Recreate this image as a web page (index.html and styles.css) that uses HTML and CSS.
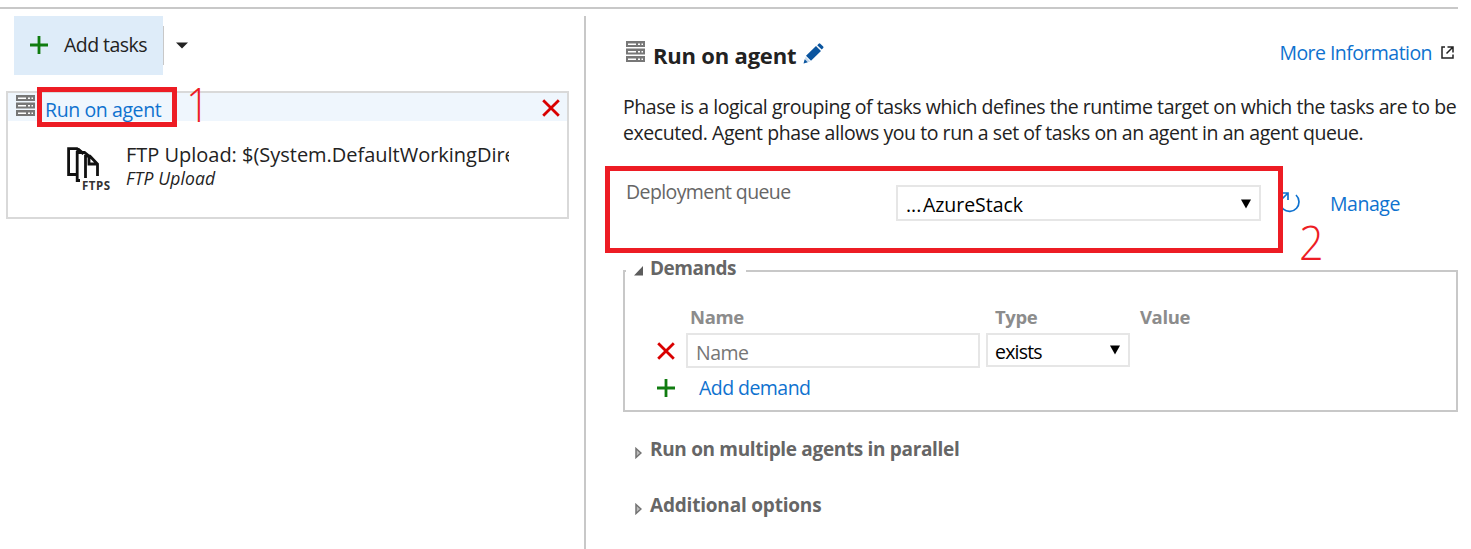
FILE: index.html
```html
<!DOCTYPE html>
<html lang="en">
<head>
<meta charset="utf-8">
<title>Run on agent</title>
<link rel="stylesheet" href="styles.css">
</head>
<body>
<svg class="defs" width="0" height="0" aria-hidden="true">
  <symbol id="server" viewBox="0 0 19 22">
    <path fill="#777" d="M0 0h19v6H0zM0 7.500h19v6H0zM0 15h19v6H0z"/>
    <path fill="#fff" d="M2 2.500h8v1.500h-8zM12 2.500h2v1.500h-2zM15.500 2.500h1.500v1.500h-1.500zM2 10h8v1.500h-8zM12 10h2v1.500h-2zM15.500 10h1.500v1.500h-1.500zM2 17.500h8v1.500h-8zM12 17.500h2v1.500h-2zM15.500 17.500h1.500v1.500h-1.500z"/>
  </symbol>
  <symbol id="plus" viewBox="0 0 18 18"><path fill="#107c10" d="M7.600 0h2.800v7.600H18v2.800h-7.600V18H7.600v-7.600H0V7.600h7.600z"/></symbol>
  <symbol id="cross" viewBox="0 0 18 18"><path fill="none" stroke="#d90000" stroke-width="2.800" d="M1.200 1.200l15.600 15.600M16.800 1.200L1.200 16.800"/></symbol>
  <symbol id="down" viewBox="0 0 10 10"><path d="M0 0.500h10L5 9.500z"/></symbol>
  <symbol id="closed" viewBox="0 0 7 12"><path fill="#bbb" stroke="#737373" stroke-width="1.500" d="M1 1.500L6 6 1 10.500z"/></symbol>
</svg>
<div class="page">
  <aside class="tasks">
    <div class="toolbar">
      <button class="add"><svg class="plus"><use href="#plus"/></svg><span class="t-add">Add tasks</span></button>
      <span class="more"><svg width="12" height="7" viewBox="0 0 12 7"><path fill="#222" d="M0 0.500h12L6 6.500z"/></svg></span>
    </div>
    <section class="card">
      <header class="phase">
        <svg class="server"><use href="#server"/></svg>
        <a class="t-run">Run on agent</a>
        <svg class="cross"><use href="#cross"/></svg>
        <div class="mark mark-one"><span class="digit">1</span></div>
      </header>
      <div class="task">
        <svg class="ftp" width="44" height="46" viewBox="0 0 44 46">
          <g fill="none" stroke="#111" stroke-width="2.800">
            <path d="M9.500 27.500H1.600V1.600H10L16.500 7"/>
            <path d="M13 33.500H10.200V5.500H17.500L22 9"/>
            <path d="M18.500 31V9.200H23L30.500 17V29M22 9.200V17H30.500"/>
          </g>
          <path fill="#111" d="M9 1h3l6 5-8 1z"/>
          <text x="15" y="43" textLength="28" class="ftps">FTPS</text>
        </svg>
        <div class="task-text">
          <div class="task-name">FTP Upload: $(System.DefaultWorkingDire</div>
          <div class="task-type">FTP Upload</div>
        </div>
      </div>
    </section>
  </aside>
  <main class="detail">
    <header class="head">
      <svg class="server"><use href="#server"/></svg>
      <h1>Run on agent</h1>
      <svg class="pencil" width="21" height="21" viewBox="0 0 21 21">
        <path fill="#0b559f" d="M3 12.800L13 3l5 5-10 9.800zM14.200 2.200l1.500-1.500q.8-.7 1.600 0l2.900 2.900q.7.700 0 1.500l-1.500 1.500z"/>
        <path fill="#c5d9ec" d="M2.600 13.700l4.700 4.700-6.300 2z"/><path fill="#0b559f" d="M.5 20.500l1.200-4.200 3 3z"/>
      </svg>
      <a class="t-info">More Information</a>
      <svg class="ext" width="13" height="13" viewBox="0 0 13 13"><path fill="none" stroke="#222" stroke-width="1.500" d="M4 1H1v11h11V8.500M6.500 1H12v5.500M12 1L5.500 7.500"/></svg>
    </header>
    <p class="desc"><span class="d1">Phase is a logical grouping of tasks which defines the runtime target on which the tasks are to be</span><span class="d2">executed. Agent phase allows you to run a set of tasks on an agent in an agent queue.</span></p>
    <div class="queue">
      <label class="t-queue">Deployment queue</label>
      <div class="select wide"><span class="dots">...</span><span class="t-azure">AzureStack</span><svg class="down"><use href="#down"/></svg></div>
      <svg class="refresh" width="22" height="22" viewBox="0 0 22 22"><g fill="none" stroke="#0f72cf" stroke-width="1.700"><path d="M17 3A9.500 9.500 0 1 1 3 4"/><path d="M2 1h7v7M9 1L3 7"/></g></svg>
      <a class="t-manage">Manage</a>
      <div class="mark mark-two"><span class="digit">2</span></div>
    </div>
    <section class="demands">
      <h2 class="legend"><svg width="9" height="10" viewBox="0 0 9 10"><path fill="#5c5c5c" d="M9 0v9.500H0z"/></svg><span class="t-demands">Demands</span></h2>
      <div class="grid labels"><span></span><span class="t-name">Name</span><span class="t-type">Type</span><span class="t-value">Value</span></div>
      <div class="grid fields">
        <svg class="cross"><use href="#cross"/></svg>
        <div class="input"><span class="t-place">Name</span></div>
        <div class="select small"><span class="t-exists">exists</span><svg class="down"><use href="#down"/></svg></div>
      </div>
      <div class="new"><svg class="plus"><use href="#plus"/></svg><a class="t-demand">Add demand</a></div>
    </section>
    <h2 class="fold"><svg width="7" height="12"><use href="#closed"/></svg><span class="t-multi">Run on multiple agents in parallel</span></h2>
    <h2 class="fold"><svg width="7" height="12"><use href="#closed"/></svg><span class="t-options">Additional options</span></h2>
  </main>
</div>
</body>
</html>
```
FILE: styles.css
```css
* { box-sizing: border-box; }
body { margin: 0; background: #fff; color: #222; font: 19.5px/26px "Open Sans", "Noto Sans", sans-serif; overflow: hidden; letter-spacing: -0.55px; }
svg { display: block; flex: none; }
.defs { position: absolute; }
h1, h2, p { margin: 0; }
a { color: #0f72cf; }
span, a, h1 { white-space: nowrap; }
.page { width: 1458px; height: 542px; margin-top: 7px; border-top: 2px solid #c8c8c8; display: flex; }
.tasks { width: 586px; margin-top: 7px; border-right: 2px solid #c8c8c8; }
.toolbar { display: flex; align-items: center; height: 59px; margin-left: 14px; }
.add { width: 149px; height: 59px; padding: 0 0 2px 16px; border: 0; background: #deecf9; display: flex; align-items: center; gap: 16px; font: inherit; color: inherit; letter-spacing: inherit; }
.plus, .cross { width: 18px; height: 18px; }
.more { height: 39px; border-left: 1px solid #c8c8c8; padding-left: 12px; display: flex; align-items: center; }
.card { width: 563px; height: 128px; margin: 16px 0 0 6px; border: 2px solid #d9d9d9; }
.phase { position: relative; display: flex; height: 28px; padding: 2px 8px; background: #eff6fd; }
.server { width: 19px; height: 22px; }
.t-run { margin-left: 10px; line-height: 29px; letter-spacing: -0.4px; }
.phase .cross { margin: 4px -1px 0 auto; }
.task { display: flex; padding: 21px 0 0 59px; }
.ftp { margin-top: 5px; }
.ftps { font: bold 11.500px "Open Sans", sans-serif; fill: #333; letter-spacing: 0; }
.task-text { width: 383px; margin-left: 15px; overflow: hidden; }
.task-name { font-size: 20px; line-height: 25px; letter-spacing: -0.02px; white-space: nowrap; }
.task-type { font-size: 17.500px; line-height: 23px; font-style: italic; letter-spacing: 0.15px; }
.mark { position: absolute; border: 5px solid #ed1c24; }
.mark-one { left: 29px; top: -6px; width: 140px; height: 40px; }
.mark-two { left: -18px; top: 0; width: 678px; height: 87px; }
.digit { position: absolute; color: #ed1c24; font: 300 48px/48px "Open Sans", sans-serif; letter-spacing: 0; transform: scaleX(0.87); transform-origin: left; }
.mark-one .digit { left: 144px; top: -12px; }
.mark-two .digit { left: 689px; top: 47px; transform: scaleX(0.9); }
.detail { width: 872px; padding: 27px 0 0 37px; }
.head { display: flex; height: 57px; padding: 5px 4px 0 3px; }
h1 { margin-left: 8px; font-size: 22px; line-height: 29px; letter-spacing: -0.2px; }
.pencil { margin: 2px 0 0 7px; }
.t-info { margin-left: auto; line-height: 24px; }
.ext { margin: 5px 0 0 9px; }
.desc { height: 73px; padding-top: 1px; }
.desc span { display: block; letter-spacing: -0.44px; }
.queue { position: relative; display: flex; height: 87px; padding-left: 3px; }
.t-queue { width: 270px; margin-top: 13px; color: #666; letter-spacing: -0.6px; }
.select, .input { border: 2px solid #e6e6e6; display: flex; align-items: center; color: #000; }
.wide { width: 365px; height: 36px; margin-top: 19px; padding: 4px 8px 0 8px; }
.dots { letter-spacing: 0; width: 17px; }
.t-azure { letter-spacing: -0.05px; }
.down { width: 10px; height: 10px; margin: -3px 0 0 auto; }
.refresh { margin: 26px 0 0 18px; }
.t-manage { margin: 25px 0 0 29px; letter-spacing: -0.45px; }
.demands { position: relative; width: 835px; height: 142px; margin-top: 17px; border: 2px solid #c8c8c8; }
.legend { position: absolute; left: 1px; top: -17px; width: 120px; padding-left: 8px; display: flex; background: #fff; }
.legend svg { margin: 11px 7px 0 0; }
h2 { font-size: 19px; line-height: 26px; color: #666; letter-spacing: -0.3px; }
.t-demands { letter-spacing: -0.5px; }
.t-multi { letter-spacing: -0.33px; }
.t-options { letter-spacing: -0.2px; }
.grid { display: grid; grid-template-columns: 61px 300px 153px 1fr; }
.labels { height: 61px; padding-top: 32px; font-size: 18.500px; font-weight: bold; color: #8c8c8c; letter-spacing: -0.4px; }
.labels span { padding-left: 4px; }
.labels .t-type { padding-left: 9px; }
.labels .t-value { padding-left: 1px; }
.fields .cross { margin: 9px 0 0 32px; }
.input { width: 294px; height: 35px; padding: 4px 8px 0; color: #767676; }
.small { width: 144px; height: 34px; padding: 3px 8px 0 7px; }
.small .t-exists { letter-spacing: -0.8px; }
.new { display: flex; padding: 5px 0 0 32px; }
.new .plus { margin-top: 6px; }
.t-demand { margin: 2px 0 0 24px; }
.fold { display: flex; height: 56px; padding: 24px 0 0 12px; }
.fold svg { margin: 11px 8px 0 0; }
```
